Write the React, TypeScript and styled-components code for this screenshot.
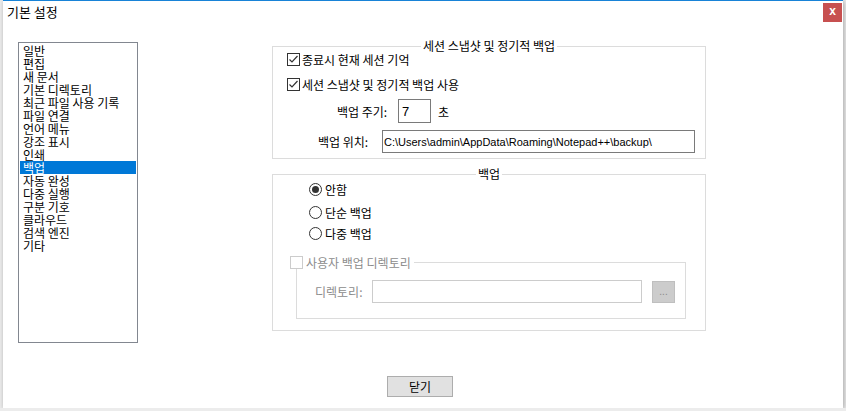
import React from 'react';
import styled, { createGlobalStyle } from 'styled-components';

const GlobalStyle = createGlobalStyle`
  html, body {
    margin: 0;
    padding: 0;
    background: #ececec;
  }
  body {
    font-family: "Noto Sans CJK KR", "Noto Sans", sans-serif;
    font-size: 12px;
    color: #000;
  }
`;

const categories = [
  '일반',
  '편집',
  '새 문서',
  '기본 디렉토리',
  '최근 파일 사용 기록',
  '파일 연결',
  '언어 메뉴',
  '강조 표시',
  '인쇄',
  '백업',
  '자동 완성',
  '다중 실행',
  '구분 기호',
  '클라우드',
  '검색 엔진',
  '기타',
];

const CheckMark = () => (
  <svg width="11" height="11" viewBox="0 0 11 11">
    <path d="M1.5 5.5 L4 8 L9.5 2" fill="none" stroke="#333" strokeWidth="1.2" />
  </svg>
);

const Checkbox = ({ checked, disabled }: { checked?: boolean; disabled?: boolean }) => (
  <CheckBoxFrame $disabled={disabled}>{checked && <CheckMark />}</CheckBoxFrame>
);

const Radio = ({ checked }: { checked?: boolean }) => (
  <RadioFrame>{checked && <RadioDot />}</RadioFrame>
);

const App = () => {
  return (
    <>
      <GlobalStyle />
      <Dialog>
        <TitleBar>
          <Title>기본 설정</Title>
          <CloseButton>x</CloseButton>
        </TitleBar>
        <Body>
          <CategoryList>
            {categories.map((c) => (
              <CategoryItem key={c} $selected={c === '백업'}>
                {c}
              </CategoryItem>
            ))}
          </CategoryList>
          <RightColumn>
            <GroupBox $height={113}>
              <Legend>세션 스냅샷 및 정기적 백업</Legend>
              <GroupContent $pad="6px 0 0 14px">
                <CheckRow>
                  <Checkbox checked />
                  <span>종료시 현재 세션 기억</span>
                </CheckRow>
                <CheckRow $top={12}>
                  <Checkbox checked />
                  <span>세션 스냅샷 및 정기적 백업 사용</span>
                </CheckRow>
                <FieldRow $top={8} $indent={50}>
                  <FieldLabel $width={61}>백업 주기:</FieldLabel>
                  <TextBox $width={33} $height={24} $padLeft={3} $size={13} readOnly value="7" />
                  <Unit>초</Unit>
                </FieldRow>
                <FieldRow $top={7} $indent={31}>
                  <FieldLabel $width={64}>백업 위치:</FieldLabel>
                  <TextBox
                    $width={313}
                    $height={23}
                    $padLeft={1}
                    $size={11}
                    readOnly
                    value="C:\Users\admin\AppData\Roaming\Notepad++\backup\"
                  />
                </FieldRow>
              </GroupContent>
            </GroupBox>
            <GroupBox $height={157}>
              <Legend>백업</Legend>
              <GroupContent $pad="8px 0 0 36px">
                <RadioRow>
                  <Radio checked />
                  <span>안함</span>
                </RadioRow>
                <RadioRow $top={10}>
                  <Radio />
                  <span>단순 백업</span>
                </RadioRow>
                <RadioRow $top={8}>
                  <Radio />
                  <span>다중 백업</span>
                </RadioRow>
              </GroupContent>
              <SubGroup>
                <SubLegend>
                  <Checkbox disabled />
                  <span>사용자 백업 디렉토리</span>
                </SubLegend>
                <SubContent>
                  <FieldLabel $width={57} $disabled>
                    디렉토리:
                  </FieldLabel>
                  <TextBox $width={270} $height={23} $padLeft={2} $size={11} $disabled disabled value="" readOnly />
                  <BrowseButton>...</BrowseButton>
                </SubContent>
              </SubGroup>
            </GroupBox>
          </RightColumn>
        </Body>
        <Footer>
          <DialogButton>닫기</DialogButton>
        </Footer>
      </Dialog>
    </>
  );
};

const Dialog = styled.div`
  margin-left: 3px;
  width: 840px;
  height: 408px;
  box-sizing: border-box;
  background: #fff;
  border-top: 1px solid #1883d7;
  box-shadow: 1px 1px 5px rgba(0, 0, 0, 0.3);
  display: flex;
  flex-direction: column;
`;

const TitleBar = styled.div`
  height: 22px;
  display: flex;
  justify-content: space-between;
  align-items: flex-start;
`;

const Title = styled.div`
  padding-left: 4px;
  font-size: 13px;
  line-height: 22px;
`;

const CloseButton = styled.div`
  width: 19px;
  height: 19px;
  margin: 2px 1px 0 0;
  background: #c75050;
  color: #fff;
  font-family: "Liberation Sans", Arial, sans-serif;
  font-weight: bold;
  font-size: 12px;
  line-height: 17px;
  text-align: center;
`;

const Body = styled.div`
  display: flex;
  align-items: flex-start;
  padding: 19px 0 0 15px;
`;

const CategoryList = styled.div`
  width: 120px;
  height: 301px;
  box-sizing: border-box;
  border: 1px solid #828790;
  padding: 1px;
`;

const CategoryItem = styled.div<{ $selected?: boolean }>`
  height: 13px;
  line-height: 13px;
  padding-left: 3px;
  white-space: nowrap;
  background: ${(p) => (p.$selected ? '#0078d7' : 'transparent')};
  color: ${(p) => (p.$selected ? '#fff' : '#000')};
`;

const RightColumn = styled.div`
  margin: 4px 0 0 134px;
  width: 434px;
  display: flex;
  flex-direction: column;
  gap: 15px;
`;

const GroupBox = styled.div<{ $height: number }>`
  position: relative;
  height: ${(p) => p.$height}px;
  box-sizing: border-box;
  border: 1px solid #dcdcdc;
`;

const Legend = styled.div`
  position: absolute;
  top: -9px;
  left: 50%;
  transform: translateX(-50%);
  background: #fff;
  padding: 0 2px;
  line-height: 15px;
  white-space: nowrap;
`;

const GroupContent = styled.div<{ $pad: string }>`
  padding: ${(p) => p.$pad};
  display: flex;
  flex-direction: column;
`;

const CheckRow = styled.div<{ $top?: number }>`
  display: flex;
  align-items: center;
  gap: 2px;
  height: 13px;
  margin-top: ${(p) => p.$top ?? 0}px;
`;

const CheckBoxFrame = styled.div<{ $disabled?: boolean }>`
  width: 13px;
  height: 13px;
  box-sizing: border-box;
  border: 1px solid ${(p) => (p.$disabled ? '#cccccc' : '#333')};
  background: #fff;
  display: flex;
  align-items: center;
  justify-content: center;
  flex: none;
`;

const RadioRow = styled(CheckRow)`
  gap: 3px;
`;

const RadioFrame = styled.div`
  width: 13px;
  height: 13px;
  box-sizing: border-box;
  border: 1px solid #333;
  border-radius: 50%;
  background: #fff;
  display: flex;
  align-items: center;
  justify-content: center;
  flex: none;
`;

const RadioDot = styled.div`
  width: 7px;
  height: 7px;
  border-radius: 50%;
  background: #333;
`;

const FieldRow = styled.div<{ $top: number; $indent: number }>`
  display: flex;
  align-items: center;
  margin: ${(p) => p.$top}px 0 0 ${(p) => p.$indent}px;
`;

const FieldLabel = styled.div<{ $width: number; $disabled?: boolean }>`
  width: ${(p) => p.$width}px;
  flex: none;
  white-space: nowrap;
  color: ${(p) => (p.$disabled ? '#8c8c8c' : '#000')};
`;

const TextBox = styled.input<{
  $width: number;
  $height: number;
  $padLeft: number;
  $size: number;
  $disabled?: boolean;
}>`
  width: ${(p) => p.$width}px;
  height: ${(p) => p.$height}px;
  box-sizing: border-box;
  margin: 0;
  border: 1px solid ${(p) => (p.$disabled ? '#cccccc' : '#7a7a7a')};
  background: #fff;
  padding: 0 0 0 ${(p) => p.$padLeft}px;
  font-family: "Liberation Sans", Arial, sans-serif;
  font-size: ${(p) => p.$size}px;
  color: #000;
  outline: none;
`;

const Unit = styled.span`
  margin-left: 7px;
`;

const SubGroup = styled.div`
  position: relative;
  margin: 22px 0 0 23px;
  width: 390px;
  height: 57px;
  box-sizing: border-box;
  border: 1px solid #dcdcdc;
`;

const SubLegend = styled.div`
  position: absolute;
  top: -7px;
  left: -7px;
  height: 13px;
  display: flex;
  align-items: center;
  gap: 3px;
  padding-right: 3px;
  background: #fff;
  color: #8c8c8c;
  white-space: nowrap;
`;

const SubContent = styled.div`
  display: flex;
  align-items: center;
  padding: 17px 0 0 18px;
`;

const BrowseButton = styled.div`
  width: 23px;
  height: 22px;
  margin-left: 10px;
  box-sizing: border-box;
  background: #cccccc;
  border: 1px solid #bfbfbf;
  color: #8a8a8a;
  font-family: "Liberation Sans", Arial, sans-serif;
  font-size: 10px;
  line-height: 20px;
  text-align: center;
`;

const Footer = styled.div`
  display: flex;
  padding: 33px 0 0 384px;
`;

const DialogButton = styled.div`
  width: 66px;
  height: 21px;
  box-sizing: border-box;
  background: #e1e1e1;
  border: 1px solid #adadad;
  line-height: 19px;
  text-align: center;
`;

export default App;
